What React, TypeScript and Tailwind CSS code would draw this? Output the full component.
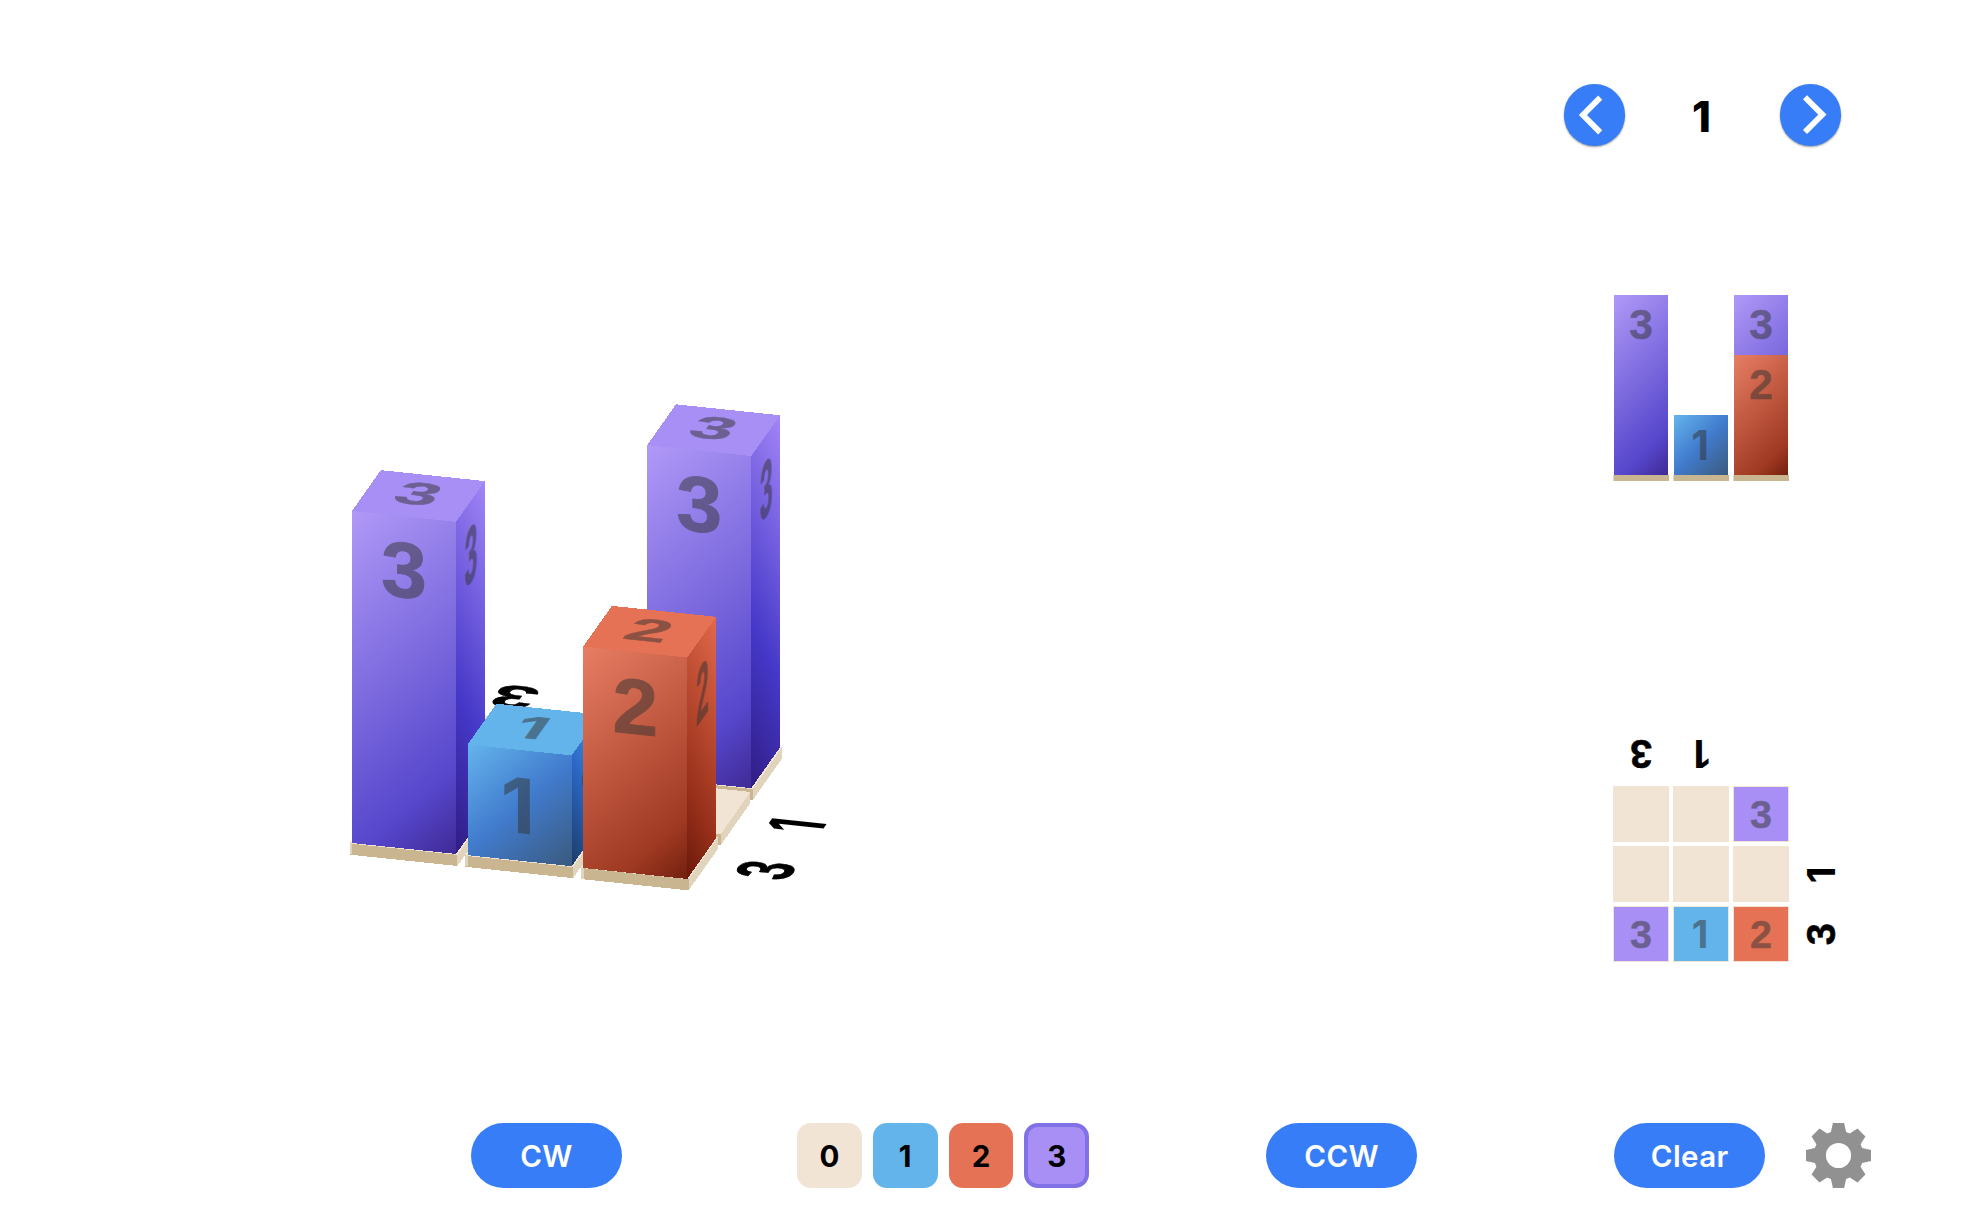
import React from 'react';

type Digit = 1 | 2 | 3;

const AX = 1.927;
const AY = 0.203;
const H = 1.845;
const ZX = 0.533;
const ZY = 0.755;

const topFill: Record<number, string> = { 1: '#64b4ec', 2: '#e57254', 3: '#a78ff5' };

const frontStops: Record<number, [number, string][]> = {
  1: [[0, '#64b4ec'], [0.5, '#417bcd'], [1, '#3a5a7e']],
  2: [[0, '#e77e64'], [0.8, '#a13a23'], [1, '#73200f']],
  3: [[0, '#b099f7'], [0.8, '#5647cc'], [1, '#402a96']],
};

const sideStops: Record<number, [number, string][]> = {
  1: [[0, '#4a9be8'], [0.5, '#2a66c4'], [1, '#1c3c66']],
  2: [[0, '#e2694b'], [0.7, '#98301a'], [1, '#6b190b']],
  3: [[0, '#a286f6'], [0.62, '#4538c8'], [1, '#301d84']],
};

const digitFont = (n: number) =>
  n === 1 ? 'Inter, "Liberation Sans", sans-serif' : '"Liberation Sans", Arial, sans-serif';

function Glyph({ n, x, y, size, fill = '#333', opacity = 0.5, rotate = 0 }: {
  n: number; x: number; y: number; size: number; fill?: string; opacity?: number; rotate?: number;
}) {
  const s = n === 1 ? size * 0.97 : size;
  return (
    <g transform={`translate(${x} ${y}) rotate(${rotate})`} opacity={opacity}>
      <text
        x={n === 1 ? -0.9 : 0}
        y={size * 0.348}
        textAnchor="middle"
        fontFamily={digitFont(n)}
        fontWeight={700}
        fontSize={s}
        fill={fill}
        stroke={fill}
        strokeWidth={n === 1 ? 0 : 0.5}
      >
        {n}
      </text>
    </g>
  );
}

const cell = (i: number, j: number) => ({ x: 352 + 115.6 * i + 32 * j, y: 843 + 12.2 * i - 45.1 * j });

const faceY = (n: number) => (n === 1 ? 30.4 : n === 2 ? 29.6 : 29);

function Slab({ i, j }: { i: number; j: number }) {
  const c = cell(i, j);
  const x = c.x - AX - ZX;
  const y = c.y - AY + ZY;
  return (
    <g shapeRendering="crispEdges">
      <rect width={56} height={56.5} fill="#f1e4d4" transform={`matrix(${AX} ${AY} ${-ZX} ${ZY} ${x + 56 * ZX} ${y - 56 * ZY})`} />
      <rect width={56} height={6} fill="#c9b590" transform={`matrix(${AX} ${AY} 0 ${H} ${x} ${y})`} />
      <rect width={1.5} height={6} fill="#e0d4bc" transform={`matrix(${AX} ${AY} 0 ${H} ${x} ${y - 0.6})`} />
      <rect width={56} height={6} fill="#e0d4bc" transform={`matrix(${ZX} ${-ZY} 0 ${H} ${x + 56 * AX} ${y + 56 * AY})`} />
    </g>
  );
}

function Tower({ i, j, n }: { i: number; j: number; n: Digit }) {
  const c = cell(i, j);
  const h = n * 60;
  const y = c.y - h * H + (n === 2 ? 0.6 : 0);
  return (
    <g>
      <g transform={`matrix(${AX} ${AY} ${-ZX} ${ZY} ${c.x + 54 * ZX} ${y - 54 * ZY})`}>
        <path d="M0 0H54V54L53.5 55H0.5L0 54Z" fill={topFill[n]} shapeRendering="crispEdges" />
        <Glyph n={n} x={26.2} y={n === 3 ? 24 : 25} size={39.5} />
      </g>
      <g transform={`matrix(${AX} ${AY} 0 ${H} ${c.x} ${y})`}>
        <rect width={54} height={h} fill={`url(#front${n})`} shapeRendering="crispEdges" />
        <Glyph n={n} x={27} y={faceY(n)} size={42.5} />
      </g>
      <g transform={`matrix(${ZX} ${-ZY} 0 ${H} ${c.x + 54 * AX} ${y + 54 * AY})`}>
        <rect width={54} height={h} fill={`url(#side${n})`} shapeRendering="crispEdges" />
        <Glyph n={n} x={28} y={faceY(n)} size={42.5} />
      </g>
    </g>
  );
}

function FloorLabel({ i, j, n, rotate }: { i: number; j: number; n: number; rotate: number }) {
  const c = cell(i, j);
  return (
    <g transform={`matrix(${AX} ${AY} ${-ZX} ${ZY} ${c.x + 54 * ZX} ${c.y - 54 * ZY + (j === 3 ? 4.3 : 5.3)})`}>
      <Glyph n={n} x={27} y={27} size={40} fill="#000" opacity={1} rotate={rotate} />
    </g>
  );
}

const heights = [
  [3, 1, 2],
  [0, 0, 0],
  [0, 0, 3],
];

function Scene() {
  return (
    <svg width={1400} height={1060} viewBox="0 0 1400 1060" className="block">
      <defs>
        {[1, 2, 3].map((n) => {
          const w = 54;
          const h = n * 60;
          const d = (w + h) / 2;
          return (
            <React.Fragment key={n}>
              <linearGradient id={`front${n}`} gradientUnits="userSpaceOnUse" x1={0} y1={0} x2={d} y2={d}>
                {frontStops[n].map(([o, c]) => <stop key={o} offset={o} stopColor={c} />)}
              </linearGradient>
              <linearGradient id={`side${n}`} gradientUnits="userSpaceOnUse" x1={w} y1={0} x2={w - d} y2={d}>
                {sideStops[n].map(([o, c]) => <stop key={o} offset={o} stopColor={c} />)}
              </linearGradient>
            </React.Fragment>
          );
        })}
      </defs>
      <FloorLabel i={0} j={3} n={3} rotate={180} />
      <FloorLabel i={1} j={3} n={1} rotate={180} />
      {[2, 1, 0].map((j) =>
        [0, 1, 2].map((i) => (
          <g key={`${i}-${j}`}>
            <Slab i={i} j={j} />
            {heights[j][i] > 0 && <Tower i={i} j={j} n={heights[j][i] as Digit} />}
          </g>
        )),
      )}
      <FloorLabel i={3} j={1} n={1} rotate={-90} />
      <FloorLabel i={3} j={0} n={3} rotate={-90} />
    </svg>
  );
}

function Digit2D({ n, h, size, label = false, rotate = 0 }: { n: number; h: number; size: number; label?: boolean; rotate?: number }) {
  return (
    <svg width={54} height={h} className="block">
      <Glyph n={n} x={27} y={h === 60 ? faceY(n) : h / 2} size={size} fill={label ? '#000' : '#333'} opacity={label ? 1 : 0.5} rotate={rotate} />
    </svg>
  );
}

const grad: Record<number, string> = {
  1: 'bg-[linear-gradient(135deg,#64b4ec_0%,#417bcd_50%,#3a5a7e_100%)] h-[60px]',
  2: 'bg-[linear-gradient(135deg,#e77e64_0%,#a13a23_80%,#73200f_100%)] h-[120px]',
  3: 'bg-[linear-gradient(135deg,#b099f7_0%,#5647cc_80%,#402a96_100%)] h-[180px]',
};

function FrontColumn({ blocks }: { blocks: number[] }) {
  return (
    <div className="flex w-[56px] flex-col items-center">
      <div className="grid h-[180px] items-end">
        {blocks.map((n) => (
          <div key={n} className={`col-start-1 row-start-1 w-[54px] ${grad[n]}`}>
            <Digit2D n={n} h={60} size={42.5} />
          </div>
        ))}
      </div>
      <div className="h-[6px] w-[56px] border-l border-[#e0d4bc] bg-[#c9b590]" />
    </div>
  );
}

const tile: Record<number, string> = { 0: 'bg-[#f1e4d4]', 1: 'bg-[#64b4ec]', 2: 'bg-[#e57254]', 3: 'bg-[#a78ff5]' };

function TopCell({ n }: { n: number }) {
  return (
    <div className={`h-[56px] w-[56px] border border-[#f1e4d4] ${tile[n]}`}>
      {n > 0 && <Digit2D n={n} h={54} size={39.5} />}
    </div>
  );
}

function RoundButton({ dir }: { dir: 'left' | 'right' }) {
  return (
    <button className="h-[62px] w-[61px] rounded-full bg-[#387df8] shadow-[0_1px_2px_rgba(0,0,0,0.4)]" aria-label={dir}>
      <svg width={61} height={62} viewBox="0 0 61 62" fill="none" stroke="#fff" strokeWidth={5.8}>
        <path d={dir === 'left' ? 'M36.2 13.6 18.9 31 36.2 48.4' : 'M25 13.2 42.4 30.6 25 48'} />
      </svg>
    </button>
  );
}

function Pill({ children }: { children: string }) {
  return (
    <button className="flex h-[65px] w-[151px] items-center justify-center rounded-full bg-[#387df8] pt-[1px] font-['Inter',sans-serif] text-[29.5px] font-semibold tracking-[0.4px] text-white">
      {children}
    </button>
  );
}

function Gear() {
  const pts: string[] = [];
  for (let k = 0; k < 8; k++) {
    const a = (k * Math.PI) / 4;
    for (const [x, y] of [[-7.6, -23.6], [-5.6, -32.5], [5.6, -32.5], [7.6, -23.6]]) {
      pts.push(`${(x * Math.cos(a) - y * Math.sin(a)).toFixed(2)} ${(x * Math.sin(a) + y * Math.cos(a)).toFixed(2)}`);
    }
  }
  return (
    <svg width={65} height={65} viewBox="-32.5 -32.5 65 65">
      <path fillRule="evenodd" fill="#919191" d={`M${pts.join('L')}ZM12.6 0A12.6 12.6 0 1 0 -12.6 0A12.6 12.6 0 1 0 12.6 0Z`} />
    </svg>
  );
}

export default function App() {
  return (
    <div className="flex h-[1222px] w-[1964px] flex-col overflow-hidden bg-white">
      <div className="flex h-[1060px]">
        <main className="w-[1400px]">
          <Scene />
        </main>
        <aside className="flex w-[564px] flex-col">
          <div className="ml-[164px] mt-[84px] flex h-[62px] w-[277px] items-center justify-between">
            <RoundButton dir="left" />
            <span className="pr-[2px] pt-[2px] font-['Inter',sans-serif] text-[43px] font-extrabold leading-none text-black">1</span>
            <RoundButton dir="right" />
          </div>
          <div className="ml-[213px] mt-[149px] flex gap-1">
            <FrontColumn blocks={[3]} />
            <FrontColumn blocks={[1]} />
            <FrontColumn blocks={[3, 2]} />
          </div>
          <div className="ml-[213px] mt-[245px] grid w-[236px] grid-cols-[56px_56px_56px_56px] grid-rows-[56px_56px_56px_56px] gap-1">
            <div className="p-px"><Digit2D n={3} h={54} size={40} label rotate={180} /></div>
            <div className="p-px"><Digit2D n={1} h={54} size={40} label rotate={180} /></div>
            <div />
            <div />
            <TopCell n={0} />
            <TopCell n={0} />
            <TopCell n={3} />
            <div />
            <TopCell n={0} />
            <TopCell n={0} />
            <TopCell n={0} />
            <div className="p-px"><Digit2D n={1} h={54} size={40} label rotate={-90} /></div>
            <TopCell n={3} />
            <TopCell n={1} />
            <TopCell n={2} />
            <div className="p-px"><Digit2D n={3} h={54} size={40} label rotate={-90} /></div>
          </div>
        </aside>
      </div>
      <footer className="mt-[63px] flex h-[65px] items-center pl-[471px]">
        <Pill>CW</Pill>
        <div className="ml-[175px] flex gap-[11px] font-['Inter',sans-serif] text-[29.5px] font-bold text-black">
          {[0, 1, 2, 3].map((n) => (
            <button
              key={n}
              className={`flex h-[65px] w-[64.8px] items-center justify-center rounded-[14px] pt-[1px] ${tile[n]} ${n === 3 ? 'border-4 border-[#8071e6]' : ''}`}
            >
              {n}
            </button>
          ))}
        </div>
        <div className="ml-[177px]"><Pill>CCW</Pill></div>
        <div className="ml-[197px]"><Pill>Clear</Pill></div>
        <button className="ml-[41px]" aria-label="Settings"><Gear /></button>
      </footer>
    </div>
  );
}
